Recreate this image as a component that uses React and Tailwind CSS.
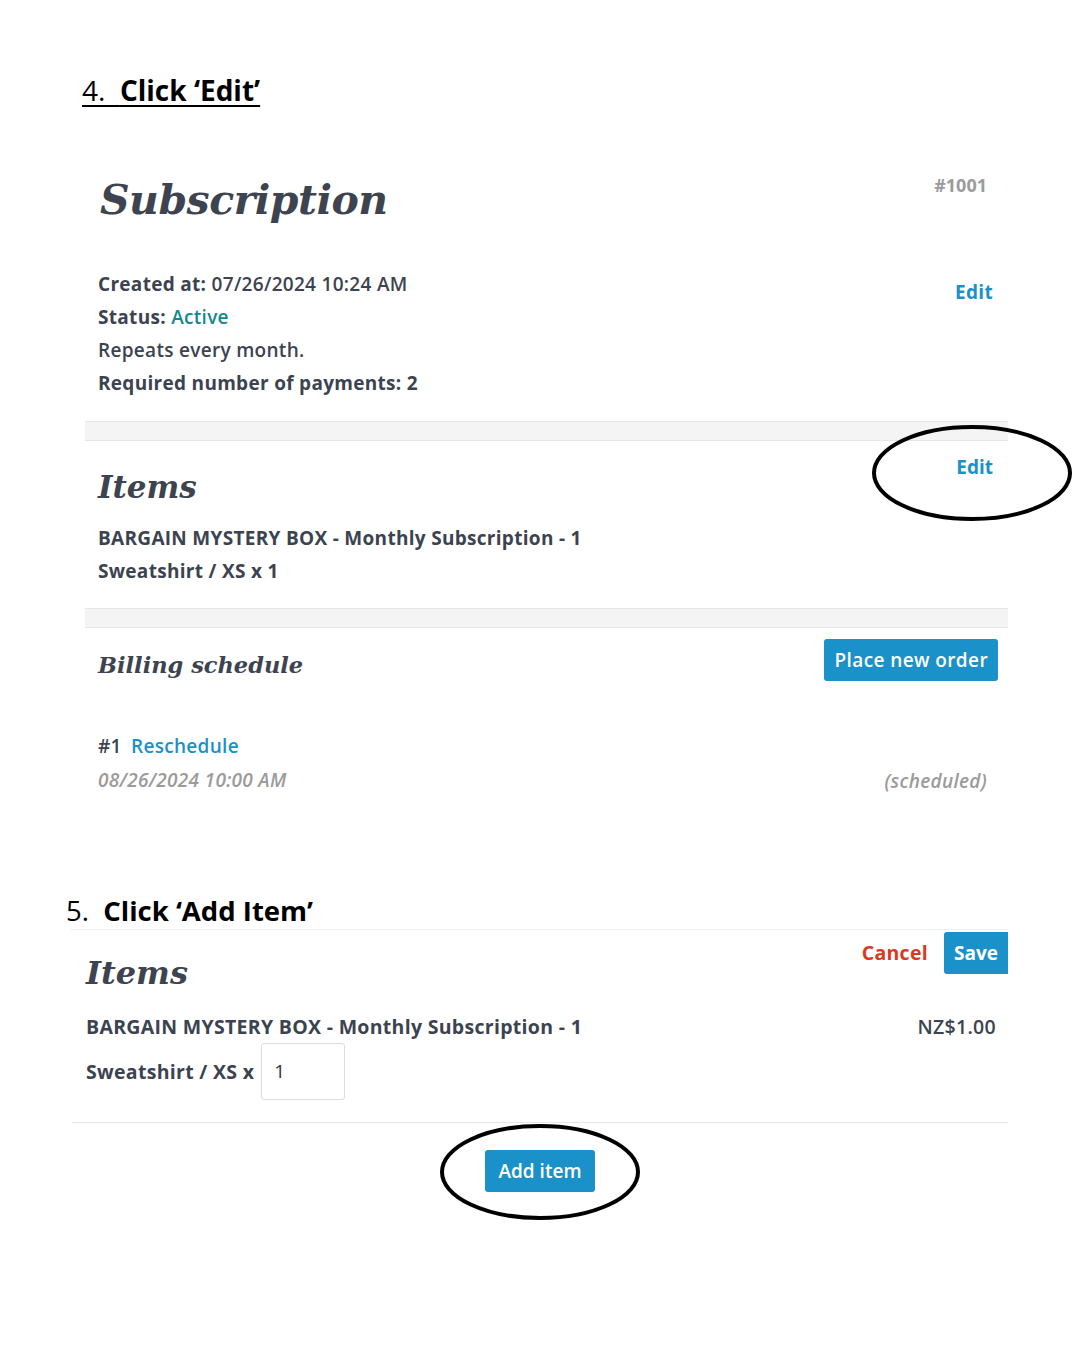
const body = { fontFamily: '"Open Sans", "Liberation Sans", sans-serif' };
const slab = { fontFamily: '"DejaVu Serif", "Liberation Serif", serif' };

const Band = () => (
  <div className="h-[20px] bg-[#f4f4f4] border-y border-[#e6e6e6]" />
);

const Ring = ({ className }) => (
  <svg className={`absolute pointer-events-none ${className}`} width="204" height="100" viewBox="0 0 204 100">
    <ellipse cx="102" cy="50" rx="98" ry="46" fill="none" stroke="#000" strokeWidth="4" />
  </svg>
);

export default function App() {
  return (
    <div className="relative w-[1080px] min-h-[1350px] bg-white text-[#3c4350]" style={body}>
      {/* step 4 */}
      <div className="pt-[72px] pl-[82px]">
        <h2 className="text-[28px] leading-[36px] text-black underline underline-offset-[4px] decoration-[2px]">
          4.&nbsp; <span className="font-bold">Click ‘Edit’</span>
        </h2>
      </div>

      <div className="ml-[85px] w-[923px] mt-[60px]">
        <div className="flex justify-between items-start pl-[15px] pr-[21px]">
          <h1 className="text-[41px] leading-[64px] font-bold italic text-[#3d4450] tracking-[-0.5px]" style={slab}>
            Subscription
          </h1>
          <span className="text-[18px] font-bold text-[#9b9b9b] mt-[2px] leading-[30px]">#1001</span>
        </div>

        <div className="flex justify-between items-start pl-[13px] pr-[15px] mt-[36px] text-[19px] tracking-[0.3px] leading-[33px] font-semibold">
          <div>
            <div><span className="font-bold">Created at:</span> 07/26/2024 10:24 AM</div>
            <div><span className="font-bold">Status:</span> <span className="text-[#13898f]">Active</span></div>
            <div>Repeats every month.</div>
            <div className="font-bold">Required number of payments: 2</div>
          </div>
          <a className="text-[#1b91c9] font-bold mt-[8px]">Edit</a>
        </div>

        <div className="mt-[21px]"><Band /></div>

        <div className="flex justify-between items-start pl-[13px] pr-[15px]">
          <div className="pt-[24px]">
            <h3 className="text-[31px] leading-[44px] font-bold italic text-[#3d4450]" style={slab}>Items</h3>
            <div className="mt-[13px] text-[19px] tracking-[0.3px] leading-[33px] font-bold">
              <div>BARGAIN MYSTERY BOX - Monthly Subscription - 1</div>
              <div>Sweatshirt / XS x 1</div>
            </div>
          </div>
          <a className="text-[#1b91c9] font-bold text-[19px] leading-[33px] mt-[10px]">Edit</a>
        </div>

        <div className="mt-[20px]"><Band /></div>

        <div className="flex justify-between items-start pl-[13px] pr-[10px]">
          <h3 className="mt-[19px] text-[22.5px] leading-[36px] font-bold italic text-[#3d4450]" style={slab}>
            Billing schedule
          </h3>
          <button className="mt-[11px] h-[42px] px-[10px] rounded-[3px] bg-[#1b91c9] text-white text-[19px] font-semibold tracking-[0.4px]">
            Place new order
          </button>
        </div>

        <div className="pl-[13px] pr-[21px] mt-[46px] text-[19px] tracking-[0.3px] leading-[34px]">
          <div className="font-semibold">
            #1 <a className="ml-[4px] text-[#1b91c9]">Reschedule</a>
          </div>
          <div className="flex justify-between italic font-semibold text-[#9b9b9b]">
            <span>08/26/2024 10:00 AM</span>
            <span className="mt-[1px]">(scheduled)</span>
          </div>
        </div>
      </div>

      {/* step 5 */}
      <div className="pl-[66px] mt-[95px]">
        <h2 className="text-[27.5px] leading-[36px] text-black">
          5.&nbsp; <span className="font-bold">Click ‘Add Item’</span>
        </h2>
      </div>

      <div className="ml-[70px] w-[938px] border-t border-[#efefef]">
        <div className="flex justify-between items-start pl-[16px]">
          <h3 className="mt-[21px] text-[32px] leading-[44px] font-bold italic text-[#3d4450]" style={slab}>Items</h3>
          <div className="flex items-center gap-[16px] mt-[2px]">
            <a className="text-[#d93a1e] text-[19.5px] tracking-[0.3px] font-bold">Cancel</a>
            <button className="h-[42px] px-[10px] rounded-l-[3px] bg-[#1b91c9] text-white text-[19px] font-bold">Save</button>
          </div>
        </div>
        <div className="pl-[16px] pr-[12px] mt-[15px] text-[19.5px] tracking-[0.3px] font-bold">
          <div className="flex justify-between leading-[33px]">
            <span>BARGAIN MYSTERY BOX - Monthly Subscription - 1</span>
            <span className="font-semibold">NZ$1.00</span>
          </div>
          <div className="flex items-center h-[57px]">
            <span>Sweatshirt / XS x</span>
            <div className="ml-[7px] w-[84px] h-[57px] border border-[#dcdcdc] rounded-[3px] flex items-center pl-[12px] text-[19px] font-normal text-[#333]">
              1
            </div>
          </div>
        </div>
        <div className="mt-[22px] border-b border-[#e6e6e6] ml-[2px]" />
        <div className="flex justify-center mt-[27px] pl-[2px]">
          <button className="h-[42px] w-[110px] rounded-[3px] bg-[#1b91c9] text-white text-[19px] font-semibold">
            Add item
          </button>
        </div>
      </div>

      <Ring className="left-[870px] top-[423px]" />
      <Ring className="left-[438px] top-[1122px]" />
    </div>
  );
}
